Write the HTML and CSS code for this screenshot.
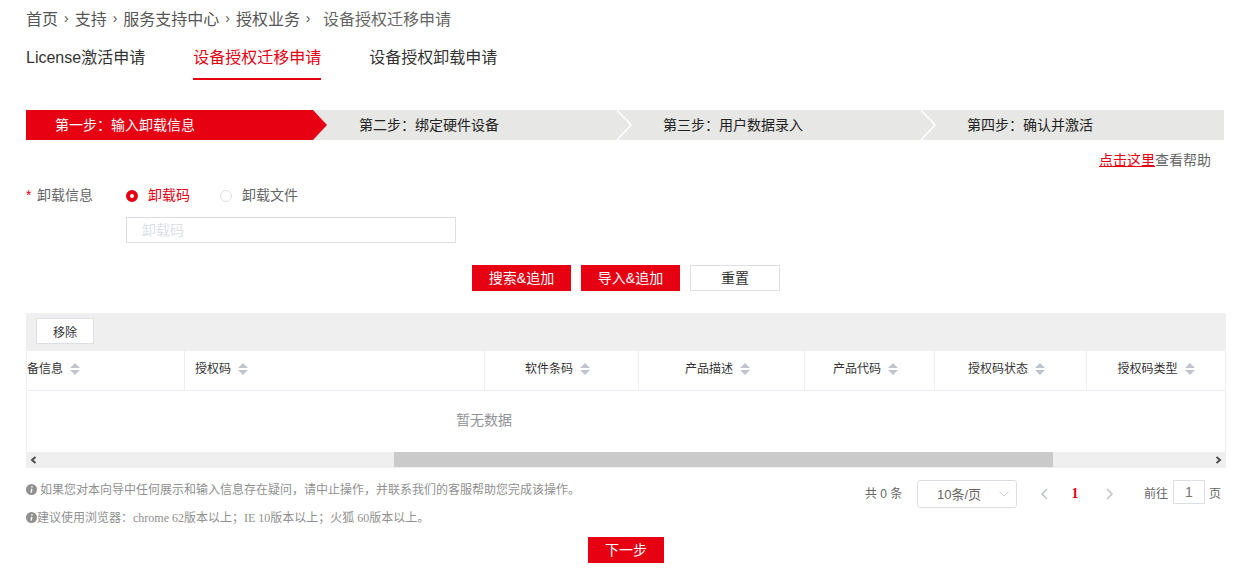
FILE: index.html
```html
<!DOCTYPE html>
<html lang="zh-CN">
<head>
<meta charset="utf-8">
<title>设备授权迁移申请</title>
<link rel="stylesheet" href="styles.css">
</head>
<body>
<main class="page">
  <nav class="crumbs">
    <span>首页</span><i class="sep">›</i><span>支持</span><i class="sep">›</i><span>服务支持中心</span><i class="sep">›</i><span>授权业务</span><i class="sep sep-last">›</i><span class="crumb-current">设备授权迁移申请</span>
  </nav>
  <div class="tabs">
    <a class="tab">License激活申请</a>
    <a class="tab tab-active">设备授权迁移申请</a>
    <a class="tab">设备授权卸载申请</a>
  </div>
  <div class="steps">
    <div class="step step-active"><span class="step-fill"></span><span class="step-text">第一步：输入卸载信息</span></div>
    <div class="step"><svg class="chev" width="16" height="30" viewBox="0 0 16 30"><path d="M1 0L15 15L1 30" fill="none" stroke="#fff" stroke-width="1.5"/></svg><span class="step-text">第二步：绑定硬件设备</span></div>
    <div class="step"><svg class="chev" width="16" height="30" viewBox="0 0 16 30"><path d="M1 0L15 15L1 30" fill="none" stroke="#fff" stroke-width="1.5"/></svg><span class="step-text">第三步：用户数据录入</span></div>
    <div class="step step-last"><span class="step-text">第四步：确认并激活</span></div>
  </div>
  <p class="help"><a class="help-link">点击这里</a>查看帮助</p>
  <div class="form-row">
    <label class="form-label"><em>*</em>卸载信息</label>
    <span class="radio radio-on"></span><span class="radio-text radio-text-on">卸载码</span>
    <span class="radio"></span><span class="radio-text">卸载文件</span>
  </div>
  <div class="input-row"><div class="input">卸载码</div></div>
  <div class="actions">
    <button class="btn btn-red">搜索&amp;追加</button>
    <button class="btn btn-red">导入&amp;追加</button>
    <button class="btn btn-plain">重置</button>
  </div>
  <section class="table">
    <div class="toolbar"><button class="btn-remove">移除</button></div>
    <div class="thead">
      <div class="th th-1"><span class="clip">设备信息</span><span class="sort"></span></div>
      <div class="th th-2"><span>授权码</span><span class="sort"></span></div>
      <div class="th th-3 center"><span>软件条码</span><span class="sort"></span></div>
      <div class="th th-4 center"><span>产品描述</span><span class="sort"></span></div>
      <div class="th th-5 center"><span>产品代码</span><span class="sort"></span></div>
      <div class="th th-6 center"><span>授权码状态</span><span class="sort"></span></div>
      <div class="th th-7 center"><span>授权码类型</span><span class="sort"></span></div>
    </div>
    <div class="empty"><span>暂无数据</span></div>
    <div class="scrollbar">
      <svg class="sb-arrow" width="8" height="8" viewBox="0 0 8 8"><path d="M5.500 1L2 4l3.500 3" fill="none" stroke="#505050" stroke-width="2"/></svg>
      <div class="sb-track"><div class="sb-thumb"></div></div>
      <svg class="sb-arrow" width="8" height="8" viewBox="0 0 8 8"><path d="M2.500 1L6 4L2.500 7" fill="none" stroke="#505050" stroke-width="2"/></svg>
    </div>
  </section>
  <div class="bottom">
    <div class="notes">
      <p class="note"><svg class="info" width="11" height="11" viewBox="0 0 11 11"><circle cx="5.500" cy="5.500" r="5.500" fill="#909090"/><path d="M6 2.300v1.300M5.700 4.800L5.200 8.700" stroke="#fff" stroke-width="1.500"/></svg> 如果您对本向导中任何展示和输入信息存在疑问，请中止操作，并联系我们的客服帮助您完成该操作。</p>
      <p class="note note-2"><svg class="info" width="11" height="11" viewBox="0 0 11 11"><circle cx="5.500" cy="5.500" r="5.500" fill="#909090"/><path d="M6 2.300v1.300M5.700 4.800L5.200 8.700" stroke="#fff" stroke-width="1.500"/></svg>建议使用浏览器：chrome 62版本以上；IE 10版本以上；火狐 60版本以上。</p>
    </div>
    <div class="pager">
      <span class="total">共 0 条</span>
      <div class="select"><span>10条/页</span><svg width="10" height="6" viewBox="0 0 10 6"><path d="M.5.500L5 5L9.500.5" fill="none" stroke="#c8ccd4" stroke-width="1"/></svg></div>
      <svg class="page-nav" width="8" height="12" viewBox="0 0 8 12"><path d="M7 1L2 6L7 11" fill="none" stroke="#c0c4cc" stroke-width="1.600"/></svg>
      <span class="page-num">1</span>
      <svg class="page-nav" width="8" height="12" viewBox="0 0 8 12"><path d="M1 1L6 6L1 11" fill="none" stroke="#c0c4cc" stroke-width="1.600"/></svg>
      <span class="goto">前往</span>
      <div class="page-input">1</div>
      <span class="page-unit">页</span>
    </div>
  </div>
  <div class="next-row"><button class="btn btn-red btn-next">下一步</button></div>
</main>
</body>
</html>
```

FILE: styles.css
```css
* { box-sizing: border-box; }
html, body { margin: 0; padding: 0; background: #fff; }
body {
  font-family: "Liberation Sans", "Noto Sans CJK SC", sans-serif;
  color: #333;
  font-size: 14px;
  overflow: hidden;
}
p { margin: 0; }
i { font-style: normal; }
em { font-style: normal; color: #e60012; display: inline-block; width: 11px; }
.page { width: 1257px; height: 581px; padding: 0 31px 0 26px; }

.crumbs {
  height: 36px;
  margin-bottom: 4px;
  display: flex;
  align-items: center;
  font-size: 16px;
  color: #555;
}
.sep { width: 16.67px; text-align: center; font-size: 14px; }
.sep-last { width: 16px; margin-right: 7px; }
.crumb-current { color: #666; }

.tabs { display: flex; gap: 48px; height: 40px; }
.tab {
  height: 40px;
  font-size: 16px;
  line-height: 36px;
  color: #333;
}
.tab-active { color: #e60012; border-bottom: 2px solid #e60012; }

.steps {
  margin-top: 30px;
  display: flex;
  width: 1198px;
  height: 30px;
  background: #e7e7e5;
}
.step { position: relative; width: 304px; height: 30px; padding-left: 29px; line-height: 30px; font-size: 14px; color: #222; }
.step-last { flex: 1; }
.step-text { position: relative; }
.step-active { color: #fff; }
.step-fill {
  position: absolute;
  left: 0; top: 0;
  width: 301px; height: 30px;
  background: #e60012;
  clip-path: polygon(0 0, 287px 0, 301px 15px, 287px 30px, 0 30px);
}
.chev { position: absolute; right: 2px; top: 0; }

.help { margin-top: 10px; padding-right: 15px; height: 20px; line-height: 20px; text-align: right; font-size: 14px; color: #666; width: 1200px; }
.help-link { color: #e60012; text-decoration: underline; }

.form-row { margin-top: 14px; display: flex; align-items: center; height: 20px; }
.form-label { width: 100px; color: #666; font-size: 14px; }
.radio { width: 12px; height: 12px; margin-top: 4px; border-radius: 50%; border: 1px solid #dcdfe6; background: #fff; }
.radio-on { border: 4px solid #e60012; }
.radio-text { margin-left: 10px; margin-right: 30px; color: #666; font-size: 14px; }
.radio-text-on { color: #e60012; }

.input-row { margin-top: 13px; padding-left: 100px; }
.input {
  width: 330px; height: 26px;
  border: 1px solid #dcdfe6;
  padding-left: 15px;
  line-height: 24px;
  color: #dcdfe6;
  font-size: 14px;
}

.actions { margin-top: 22px; display: flex; justify-content: center; gap: 10px; width: 1200px; }
.btn { height: 26px; border: 0; padding: 0 0 2px; font: inherit; font-size: 14px; }
.btn-red { width: 99px; background: #e60012; color: #fff; }
.btn-plain { width: 90px; background: #fff; border: 1px solid #dcdfe6; color: #333; }

.table { margin-top: 22px; width: 1200px; font-size: 12px; }
.toolbar { height: 38px; background: #efefef; padding: 5px 0 0 10px; }
.btn-remove { width: 58px; height: 26px; background: #fff; border: 1px solid #dcdfe6; padding: 0; font: inherit; font-size: 12px; color: #333; }
.thead { display: flex; height: 40px; border: solid #ebeef5; border-width: 0 1px 1px; }
.th { display: flex; align-items: center; gap: 7px; border-right: 1px solid #ebeef5; padding: 0 0 7px 10px; height: 39px; overflow: hidden; flex: none; }
.center { justify-content: center; padding: 0 8px 7px 0; }
.th-1 { width: 158px; padding-left: 0; }
.clip { margin-left: -12px; flex: none; }
.th-2 { width: 300px; }
.th-3 { width: 154px; }
.th-4 { width: 166px; }
.th-5 { width: 130px; }
.th-6 { width: 152px; }
.th-7 { flex: 1; border-right: 0; padding-right: 0; }
.sort { position: relative; width: 10px; height: 12px; margin-top: 3px; flex: none; }
.sort::before, .sort::after {
  content: "";
  position: absolute;
  left: 0;
  border: 5px solid transparent;
  border-top-width: 0; border-bottom-width: 0;
}
.sort::before { top: 0; border-bottom: 5px solid #c0c4cc; }
.sort::after { bottom: 0; border-top: 5px solid #c0c4cc; }
.empty { height: 61px; border: solid #ebeef5; border-width: 0 1px; display: flex; align-items: center; justify-content: center; color: #909399; font-size: 14px; padding-bottom: 6px; }
.empty span { margin-right: 284px; }
.scrollbar { height: 16px; background: #efefef; display: flex; align-items: center; padding: 0 4px; }
.sb-track { flex: 1; height: 15px; align-self: flex-start; padding-left: 356px; }
.sb-thumb { width: 659px; height: 15px; background: #cacaca; }
.sb-arrow { flex: none; }

.bottom { display: flex; justify-content: space-between; width: 1200px; }
.notes { padding-top: 14px; font-family: "Liberation Serif", "Noto Sans CJK SC", serif; font-size: 12px; color: #909090; }
.note { height: 16px; line-height: 16px; white-space: nowrap; }
.note-2 { margin-top: 12px; }
.info { vertical-align: -1px; }
.pager { display: flex; align-items: flex-start; padding-top: 12px; padding-right: 5px; font-size: 12px; color: #666; }
.total { line-height: 29px; width: 52px; }
.select {
  width: 100px; height: 28px;
  border: 1px solid #dcdfe6; border-radius: 3px;
  display: flex; align-items: center; justify-content: space-between;
  padding: 0 7px 2px 19px;
  font-size: 13px;
}
.select svg { margin-top: 2px; }
.page-nav { margin-top: 8px; flex: none; }
.select + .page-nav { margin-left: 23px; }
.page-num { width: 32px; margin: 0 15px 0 11px; text-align: center; color: #e60012; font: bold 14px/28px "Liberation Serif", serif; }
.goto { margin-left: 30px; line-height: 29px; width: 29px; }
.page-input { width: 32px; height: 24px; border: 1px solid #dcdfe6; text-align: center; line-height: 22px; font-size: 14px; color: #777; }
.page-unit { margin-left: 4px; line-height: 29px; }

.next-row { display: flex; margin-top: 11px; padding-left: 562px; }
.btn-next { width: 76px; }
```
